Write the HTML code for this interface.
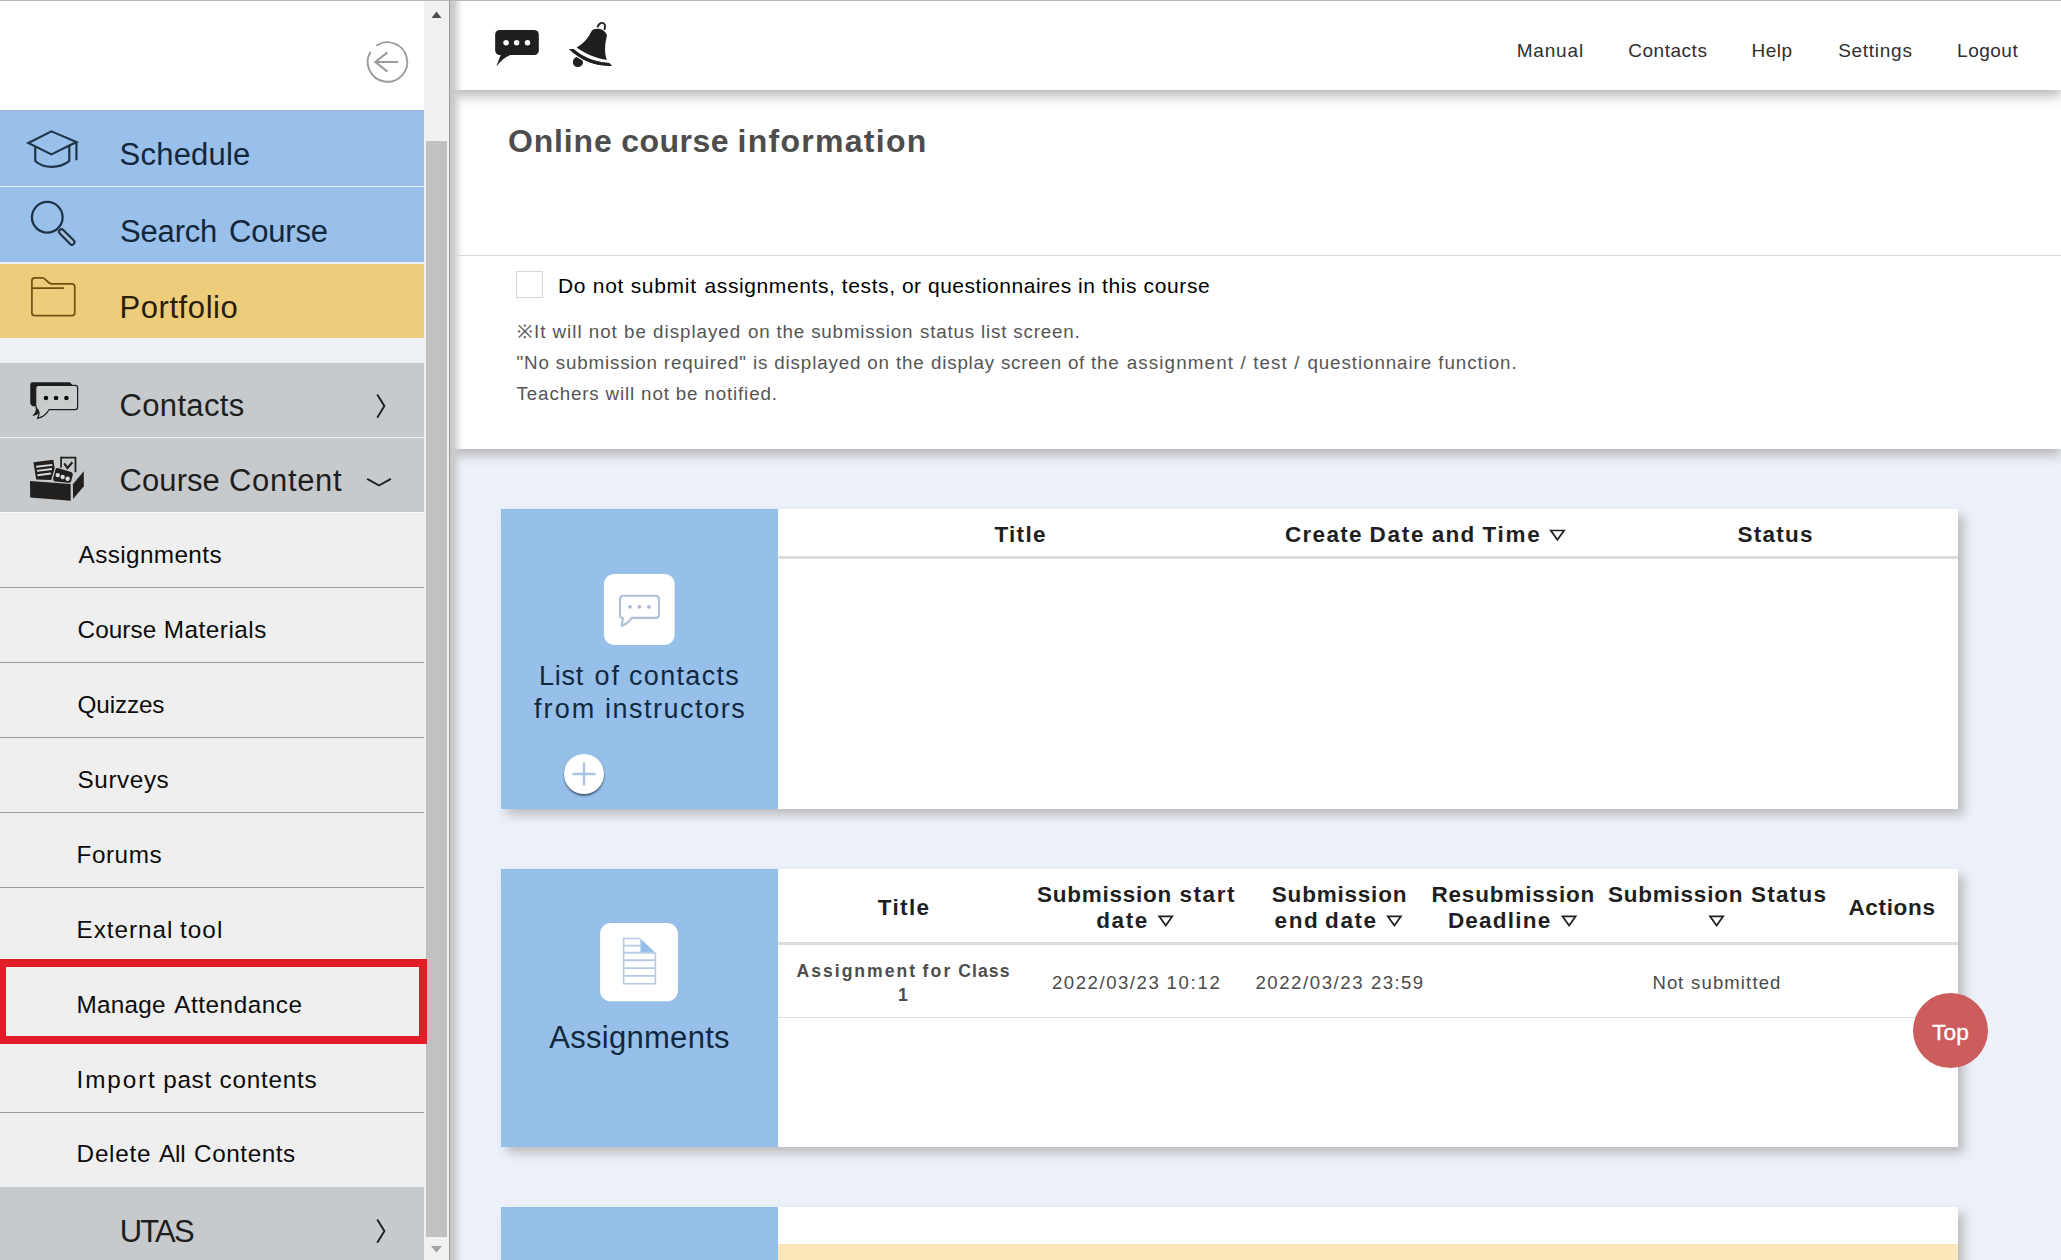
<!DOCTYPE html>
<html><head><meta charset="utf-8"><title>Course</title>
<style>
*{box-sizing:border-box;margin:0;padding:0}
html,body{width:2061px;height:1260px;overflow:hidden}
body{position:relative;background:#edf1f9;font-family:"Liberation Sans",sans-serif;color:#222}
.a{position:absolute}
.t{position:absolute;white-space:nowrap}
svg{position:absolute;overflow:visible}
/* sidebar */
#side{left:0;top:0;width:424px;height:1260px;background:#fff}
.bar{left:0;width:424px;height:76px;border-bottom:1px solid #e4eef9}
.blue{background:#98c0ea}
.yel{background:#edcd7b;border-bottom-color:#f3e3b4}
.gry{background:#c6cacd;border-bottom-color:#eceeef}
.sub{left:0;width:424px;height:75px;background:#efefef;border-bottom:1px solid #9c9c9c}
/* main */
#hdr{left:450px;top:0;width:1611px;height:90px;background:#fff;box-shadow:0 6px 11px rgba(168,168,168,.82)}
#info{left:450px;top:90px;width:1611px;height:359px;background:#fff;box-shadow:0 6px 11px rgba(168,168,168,.82)}
.card{background:#fff;box-shadow:5.500px 5.500px 10px rgba(168,168,168,.72)}
.cblue{background:#96c0e9}
.ibox{background:#fff;border-radius:11px}
.hl{height:3px;background:#dcdcdc}
.rl{height:1px;background:#dcdcdc}
</style></head><body>

<!-- main panels -->
<div class="a" id="info"></div>
<div class="a" id="hdr"></div>
<div class="a" style="left:458px;top:255px;width:1603px;height:1px;background:#dadada"></div>
<div class="a" style="left:516px;top:271px;width:27px;height:27px;border:1px solid #d8d8d8;background:#fff"></div>

<!-- card 1 -->
<div class="a card" style="left:501px;top:509px;width:1457px;height:300px"></div>
<div class="a cblue" style="left:501px;top:509px;width:277px;height:300px"></div>
<div class="a hl" style="left:778px;top:556px;width:1180px"></div>
<svg style="left:595px;top:565px" width="90" height="90" viewBox="0 0 1260 1260">
<rect x="125" y="125" width="990" height="995" rx="140" fill="#fff"/>
<path d="M395 430H850Q895 430 895 475V695Q895 740 850 740H515C480 790 430 830 372 852L392 745C365 740 350 720 350 695V475Q350 430 395 430Z" fill="none" stroke="#afc1d8" stroke-width="30" stroke-linejoin="round"/>
<circle cx="490" cy="585" r="26" fill="#a9b4d6"/><circle cx="622" cy="585" r="26" fill="#a9b8d0"/><circle cx="755" cy="585" r="26" fill="#a9b8d0"/>
</svg>
<svg style="left:554px;top:744px" width="60" height="60" viewBox="0 0 1260 1260">
<defs><filter id="pb" x="-20%" y="-20%" width="140%" height="140%"><feGaussianBlur stdDeviation="20"/></filter></defs>
<circle cx="632" cy="668" r="415" fill="#1f3447" fill-opacity=".85" filter="url(#pb)"/>
<circle cx="630" cy="630" r="420" fill="#fff"/>
<path d="M390 630H870M630 390V870" stroke="#a9c3e6" stroke-width="50" fill="none"/>
</svg>

<!-- card 2 -->
<div class="a card" style="left:501px;top:869px;width:1457px;height:278px"></div>
<div class="a cblue" style="left:501px;top:869px;width:277px;height:278px"></div>
<div class="a hl" style="left:778px;top:942px;width:1180px"></div>
<div class="a rl" style="left:778px;top:1017px;width:1180px"></div>
<svg style="left:594px;top:917px" width="90" height="90" viewBox="0 0 1260 1260">
<rect x="85" y="85" width="1090" height="1095" rx="150" fill="#fff"/>
<path d="M650 300L860 500H650Z" fill="#93bdea"/>
<path d="M650 300H415V935H860V500" fill="none" stroke="#b3cae6" stroke-width="22"/>
<path d="M415 400H650M415 500H860M415 605H860M415 715H860M415 825H860" fill="none" stroke="#b6cbe4" stroke-width="26"/>
</svg>

<!-- card 3 -->
<div class="a card" style="left:501px;top:1207px;width:1457px;height:80px"></div>
<div class="a cblue" style="left:501px;top:1207px;width:277px;height:80px"></div>
<div class="a" style="left:778px;top:1244px;width:1180px;height:30px;background:#fbe7ba"></div>

<!-- sort triangles -->
<svg style="left:0;top:0" width="2061" height="1260" viewBox="0 0 2061 1260" fill="none" stroke="#1f1f1f" stroke-width="1.7" stroke-linejoin="miter">
<path d="M1550.8 530.5H1564.1L1557.4 539.8Z"/>
<path d="M1159.2 916.3H1172.3L1165.8 925.6Z"/>
<path d="M1387.8 916.3H1401.0L1394.4 925.6Z"/>
<path d="M1562.5 916.3H1575.7L1569.1 925.6Z"/>
<path d="M1710.0 916.3H1723.2L1716.6 925.6Z"/>
</svg>

<!-- Top button -->
<div class="a" style="left:1913px;top:993px;width:75px;height:75px;border-radius:50%;background:#cd5c5c"></div>

<!-- header icons -->
<svg style="left:480px;top:10px" width="150" height="70" viewBox="0 0 2061 962">
<g fill="#211f1e">
<rect x="208" y="275" width="600" height="345" rx="62"/>
<path d="M292 600L222 778C290 690 350 640 430 615z"/>
<circle cx="1345" cy="715" r="70"/>
<path d="M1225 540L1285 535C1400 640 1570 715 1775 730L1812 768C1600 772 1400 705 1225 540Z" stroke="#fff" stroke-width="34" paint-order="stroke"/>
<path d="M1225 540L1285 535C1400 640 1570 715 1775 730L1812 768C1600 772 1400 705 1225 540Z"/>
<path d="M1545 275C1580 255 1640 250 1675 268C1710 285 1740 320 1745 350C1725 420 1712 520 1722 600C1728 640 1738 665 1745 685C1600 665 1440 600 1328 515C1400 470 1460 420 1500 350C1520 315 1530 295 1545 275Z"/>
<path d="M1618 228C1640 170 1700 160 1715 205C1720 225 1718 245 1712 262" fill="none" stroke="#211f1e" stroke-width="26" stroke-linecap="round"/>
</g>
<circle cx="358" cy="450" r="38" fill="#fff"/><circle cx="503" cy="450" r="38" fill="#fff"/><circle cx="652" cy="450" r="38" fill="#fff"/>
</svg>

<!-- left frame line + shadow -->
<div class="a" style="left:450px;top:0;width:14px;height:1260px;background:linear-gradient(90deg,rgba(198,198,198,.97),rgba(200,200,200,.9) 28%,rgba(203,203,203,.5) 55%,rgba(205,205,205,.14) 80%,rgba(205,205,205,0))"></div>
<div class="a" style="left:449px;top:0;width:1px;height:1260px;background:#9a9a9a"></div>

<!-- scrollbar -->
<div class="a" style="left:424px;top:0;width:25px;height:1260px;background:#f1f1f1"></div>
<div class="a" style="left:426px;top:141px;width:21px;height:1096px;background:#c1c1c1"></div>
<svg style="left:424px;top:0" width="25" height="1260" viewBox="0 0 25 1260" fill="#505050"><path d="M7.500 18l5-6.500 5 6.500z"/><path d="M7 1246l5.500 6.500 5.500-6.500z" fill="#a3a3a3"/></svg>

<!-- sidebar -->
<div class="a" id="side"></div>
<div class="a bar blue" style="top:110px;height:77px;border-top:1px solid #a2b8d4"></div>
<div class="a bar blue" style="top:187px;height:77px;border-bottom:2px solid #e9f0f6"></div>
<div class="a bar yel" style="top:264px;height:74px;border-bottom:0"></div>
<div class="a" style="left:0;top:338px;width:424px;height:25px;background:#eef2f7"></div>
<div class="a bar gry" style="top:363px;height:75px"></div>
<div class="a bar gry" style="top:438px;height:75px;border-bottom-color:#fbfbfb"></div>
<div class="a sub" style="top:513px"></div>
<div class="a sub" style="top:588px"></div>
<div class="a sub" style="top:663px"></div>
<div class="a sub" style="top:738px"></div>
<div class="a sub" style="top:813px"></div>
<div class="a sub" style="top:888px"></div>
<div class="a sub" style="top:963px"></div>
<div class="a sub" style="top:1038px"></div>
<div class="a sub" style="top:1113px;border-bottom:0"></div>
<div class="a bar gry" style="top:1187px;height:75px;border-bottom:0"></div>
<!-- red highlight -->
<div class="a" style="left:-2.300px;top:959px;width:429.300px;height:85px;border:8px solid #e11e27"></div>

<!-- top hairline -->
<div class="a" style="left:0;top:0;width:2061px;height:1px;background:#b5b5b5"></div>

<!-- sidebar icons -->
<!-- back arrow -->
<svg style="left:357px;top:32px" width="60" height="60" viewBox="0 0 1260 1260" fill="none" stroke="#9c9c9c" stroke-width="40" stroke-linecap="butt" stroke-linejoin="miter">
<path d="M405 288A415 415 0 1 1 285 415"/>
<path d="M865 630H395M640 428L385 630l255 202" stroke-width="44"/>
</svg>
<!-- graduation cap -->
<svg style="left:20px;top:120px" width="70" height="60" viewBox="0 0 1470 1260" fill="none" stroke="#1f3347" stroke-width="46" stroke-linejoin="miter" stroke-linecap="butt">
<path d="M175 485L660 238L1185 462L660 722Z"/>
<path d="M320 565V860C420 950 540 985 670 985C800 985 930 950 1035 860V540"/>
<path d="M1185 462V845"/>
</svg>
<!-- magnifier -->
<svg style="left:20px;top:195px" width="70" height="60" viewBox="0 0 1470 1260" fill="none" stroke="#1f3347" stroke-linecap="round">
<circle cx="573" cy="468" r="322" stroke-width="48"/>
<path d="M873 773L1090 990" stroke-width="150"/>
<path d="M873 773L1090 990" stroke-width="62" stroke="#a6bedb"/>
</svg>
<!-- folder -->
<svg style="left:20px;top:270px" width="70" height="60" viewBox="0 0 1470 1260" fill="none" stroke="#6d5312" stroke-width="36" stroke-linejoin="round">
<path d="M250 225Q250 165 310 165H470C560 165 560 290 670 290H1090Q1150 290 1150 350V900Q1150 960 1090 960H310Q250 960 250 900Z"/>
<path d="M250 380H920"/>
</svg>
<!-- contacts bubble -->
<svg style="left:20px;top:370px" width="70" height="60" viewBox="0 0 1470 1260">
<path d="M215 305Q215 255 265 255H1050L1110 330V800H330C350 850 300 930 255 965C330 950 390 930 420 880L330 760H265Q215 740 215 690Z" fill="#1e1e1e"/>
<path d="M385 325H1155Q1210 325 1210 380V775Q1210 830 1155 830H610C560 930 480 990 365 1015C400 960 410 900 385 850Q330 800 330 740V380Q330 325 385 325Z" fill="#c9cdce" stroke="#1e1e1e" stroke-width="26" stroke-linejoin="round"/>
<circle cx="545" cy="588" r="48" fill="#0c0c0c"/><circle cx="757" cy="588" r="48" fill="#0c0c0c"/><circle cx="975" cy="588" r="48" fill="#0c0c0c"/>
</svg>
<!-- course content box -->
<svg style="left:20px;top:447px" width="70" height="60" viewBox="0 0 1470 1260">
<g fill="#22201e">
<path d="M860 225H1165V530" fill="none" stroke="#22201e" stroke-width="38"/>
<path d="M862 206V435" fill="none" stroke="#22201e" stroke-width="36"/>
<path d="M930 345L997 442L1100 322" fill="none" stroke="#22201e" stroke-width="46"/>
<path d="M282 322L700 268L728 445L655 695L340 685Z"/>
<path d="M745 470Q760 430 810 445L1070 525Q1120 545 1105 600L1075 720Q1060 760 1010 750L740 725Q690 715 695 660Z" stroke="#c9cdce" stroke-width="22" paint-order="stroke"/>
<path d="M210 715L1065 775V1130L215 1060Z"/>
<path d="M1110 782L1340 508V822L1115 1092Z"/>
</g>
<g stroke="#d9dbdb" stroke-width="40" fill="none"><path d="M340 415L680 375M355 502L672 462M365 592L650 556"/></g>
<circle cx="792" cy="590" r="46" fill="#dcdedd"/><circle cx="895" cy="630" r="46" fill="#dcdedd"/><circle cx="1000" cy="667" r="46" fill="#dcdedd"/>
</svg>
<!-- chevrons -->
<svg style="left:0;top:0" width="424" height="1260" viewBox="0 0 424 1260" fill="none" stroke="#1e1e1e" stroke-width="1.9" stroke-linejoin="miter">
<path d="M377.200 394.400l7.200 11.600-7.200 11.700"/>
<path d="M377.200 1219.400l7.200 11.600-7.200 11.700"/>
<path d="M367.200 478.900l11.800 6.600 11.900-6.600"/>
</svg>

<div class="t" style="left:119.60px;top:138.90px;font-size:31px;line-height:31px;font-weight:400;color:#13263a;letter-spacing:0.210px;">Schedule</div>
<div class="t" style="left:120.10px;top:215.90px;font-size:31px;line-height:31px;font-weight:400;color:#13263a;letter-spacing:-0.196px;">Search</div>
<div class="t" style="left:229.00px;top:215.90px;font-size:31px;line-height:31px;font-weight:400;color:#13263a;letter-spacing:-0.178px;">Course</div>
<div class="t" style="left:119.40px;top:291.70px;font-size:31px;line-height:31px;font-weight:400;color:#2a2008;letter-spacing:0.590px;">Portfolio</div>
<div class="t" style="left:119.60px;top:390.30px;font-size:31px;line-height:31px;font-weight:400;color:#1e1e1e;letter-spacing:0.324px;">Contacts</div>
<div class="t" style="left:119.60px;top:465.40px;font-size:31px;line-height:31px;font-weight:400;color:#1e1e1e;letter-spacing:0.062px;">Course</div>
<div class="t" style="left:229.00px;top:465.40px;font-size:31px;line-height:31px;font-weight:400;color:#1e1e1e;letter-spacing:0.673px;">Content</div>
<div class="t" style="left:119.80px;top:1215.90px;font-size:31px;line-height:31px;font-weight:400;color:#1e1e1e;letter-spacing:-1.866px;">UTAS</div>
<div class="t" style="left:78.60px;top:542.90px;font-size:24.3px;line-height:24.3px;font-weight:400;color:#0c0c0c;letter-spacing:0.386px;">Assignments</div>
<div class="t" style="left:77.60px;top:617.70px;font-size:24.3px;line-height:24.3px;font-weight:400;color:#0c0c0c;letter-spacing:0.058px;">Course</div>
<div class="t" style="left:163.70px;top:617.70px;font-size:24.3px;line-height:24.3px;font-weight:400;color:#0c0c0c;letter-spacing:0.523px;">Materials</div>
<div class="t" style="left:77.60px;top:692.90px;font-size:24.3px;line-height:24.3px;font-weight:400;color:#0c0c0c;letter-spacing:-0.153px;">Quizzes</div>
<div class="t" style="left:77.60px;top:767.70px;font-size:24.3px;line-height:24.3px;font-weight:400;color:#0c0c0c;letter-spacing:0.563px;">Surveys</div>
<div class="t" style="left:76.60px;top:842.90px;font-size:24.3px;line-height:24.3px;font-weight:400;color:#0c0c0c;letter-spacing:0.520px;">Forums</div>
<div class="t" style="left:76.60px;top:917.70px;font-size:24.3px;line-height:24.3px;font-weight:400;color:#0c0c0c;letter-spacing:0.938px;">External</div>
<div class="t" style="left:180.00px;top:917.70px;font-size:24.3px;line-height:24.3px;font-weight:400;color:#0c0c0c;letter-spacing:1.041px;">tool</div>
<div class="t" style="left:76.60px;top:992.90px;font-size:24.3px;line-height:24.3px;font-weight:400;color:#0c0c0c;letter-spacing:0.242px;">Manage</div>
<div class="t" style="left:174.30px;top:992.90px;font-size:24.3px;line-height:24.3px;font-weight:400;color:#0c0c0c;letter-spacing:0.520px;">Attendance</div>
<div class="t" style="left:76.60px;top:1067.70px;font-size:24.3px;line-height:24.3px;font-weight:400;color:#0c0c0c;letter-spacing:1.879px;">Import</div>
<div class="t" style="left:163.30px;top:1067.70px;font-size:24.3px;line-height:24.3px;font-weight:400;color:#0c0c0c;letter-spacing:0.642px;">past</div>
<div class="t" style="left:219.60px;top:1067.70px;font-size:24.3px;line-height:24.3px;font-weight:400;color:#0c0c0c;letter-spacing:0.757px;">contents</div>
<div class="t" style="left:76.60px;top:1142.30px;font-size:24.3px;line-height:24.3px;font-weight:400;color:#0c0c0c;letter-spacing:0.736px;">Delete</div>
<div class="t" style="left:159.10px;top:1142.30px;font-size:24.3px;line-height:24.3px;font-weight:400;color:#0c0c0c;letter-spacing:-0.202px;">All</div>
<div class="t" style="left:194.10px;top:1142.30px;font-size:24.3px;line-height:24.3px;font-weight:400;color:#0c0c0c;letter-spacing:0.557px;">Contents</div>
<div class="t" style="left:1516.70px;top:41.10px;font-size:19px;line-height:19px;font-weight:400;color:#2e2e2e;letter-spacing:0.821px;">Manual</div>
<div class="t" style="left:1628.30px;top:41.10px;font-size:19px;line-height:19px;font-weight:400;color:#2e2e2e;letter-spacing:0.517px;">Contacts</div>
<div class="t" style="left:1751.50px;top:41.10px;font-size:19px;line-height:19px;font-weight:400;color:#2e2e2e;letter-spacing:0.530px;">Help</div>
<div class="t" style="left:1838.20px;top:41.10px;font-size:19px;line-height:19px;font-weight:400;color:#2e2e2e;letter-spacing:0.721px;">Settings</div>
<div class="t" style="left:1957.10px;top:41.10px;font-size:19px;line-height:19px;font-weight:400;color:#2e2e2e;letter-spacing:0.493px;">Logout</div>
<div class="t" style="left:507.90px;top:124.80px;font-size:32px;line-height:32px;font-weight:700;color:#4d4d4d;letter-spacing:0.847px;">Online</div>
<div class="t" style="left:621.30px;top:124.80px;font-size:32px;line-height:32px;font-weight:700;color:#4d4d4d;letter-spacing:0.452px;">course</div>
<div class="t" style="left:737.50px;top:124.80px;font-size:32px;line-height:32px;font-weight:700;color:#4d4d4d;letter-spacing:1.286px;">information</div>
<div class="t" style="left:558.00px;top:274.50px;font-size:21px;line-height:21px;font-weight:400;color:#000;letter-spacing:0.706px;">Do not submit</div>
<div class="t" style="left:704.50px;top:274.50px;font-size:21px;line-height:21px;font-weight:400;color:#000;letter-spacing:0.600px;">assignments, tests,</div>
<div class="t" style="left:901.90px;top:274.50px;font-size:21px;line-height:21px;font-weight:400;color:#000;letter-spacing:0.519px;">or questionnaires</div>
<div class="t" style="left:1077.90px;top:274.50px;font-size:21px;line-height:21px;font-weight:400;color:#000;letter-spacing:0.620px;">in this course</div>
<div class="t" style="left:517.00px;top:322.80px;font-size:18.8px;line-height:18.8px;font-weight:400;color:#555;letter-spacing:0.979px;">※It will not be displayed</div>
<div class="t" style="left:748.00px;top:322.80px;font-size:18.8px;line-height:18.8px;font-weight:400;color:#555;letter-spacing:0.817px;">on the submission</div>
<div class="t" style="left:920.00px;top:322.80px;font-size:18.8px;line-height:18.8px;font-weight:400;color:#555;letter-spacing:0.818px;">status list screen.</div>
<div class="t" style="left:516.60px;top:353.80px;font-size:18.8px;line-height:18.8px;font-weight:400;color:#555;letter-spacing:0.815px;">&quot;No submission required&quot;</div>
<div class="t" style="left:753.00px;top:353.80px;font-size:18.8px;line-height:18.8px;font-weight:400;color:#555;letter-spacing:0.843px;">is displayed on the</div>
<div class="t" style="left:931.10px;top:353.80px;font-size:18.8px;line-height:18.8px;font-weight:400;color:#555;letter-spacing:0.769px;">display screen of the</div>
<div class="t" style="left:1126.70px;top:353.80px;font-size:18.8px;line-height:18.8px;font-weight:400;color:#555;letter-spacing:1.134px;">assignment / test /</div>
<div class="t" style="left:1307.40px;top:353.80px;font-size:18.8px;line-height:18.8px;font-weight:400;color:#555;letter-spacing:0.920px;">questionnaire function.</div>
<div class="t" style="left:516.60px;top:384.50px;font-size:18.8px;line-height:18.8px;font-weight:400;color:#555;letter-spacing:0.841px;">Teachers will not be notified.</div>
<div class="t" style="left:994.40px;top:523.70px;font-size:22.5px;line-height:22.5px;font-weight:700;color:#1f1f1f;letter-spacing:1.317px;">Title</div>
<div class="t" style="left:1285.00px;top:523.80px;font-size:22.5px;line-height:22.5px;font-weight:700;color:#1f1f1f;letter-spacing:1.295px;">Create</div>
<div class="t" style="left:1369.50px;top:523.80px;font-size:22.5px;line-height:22.5px;font-weight:700;color:#1f1f1f;letter-spacing:1.782px;">Date</div>
<div class="t" style="left:1431.70px;top:523.80px;font-size:22.5px;line-height:22.5px;font-weight:700;color:#1f1f1f;letter-spacing:1.221px;">and</div>
<div class="t" style="left:1482.40px;top:523.80px;font-size:22.5px;line-height:22.5px;font-weight:700;color:#1f1f1f;letter-spacing:1.768px;">Time</div>
<div class="t" style="left:1737.40px;top:523.80px;font-size:22.5px;line-height:22.5px;font-weight:700;color:#1f1f1f;letter-spacing:1.270px;">Status</div>
<div class="t" style="left:539.00px;top:662.70px;font-size:27px;line-height:27px;font-weight:400;color:#12283f;letter-spacing:0.762px;">List</div>
<div class="t" style="left:594.50px;top:662.70px;font-size:27px;line-height:27px;font-weight:400;color:#12283f;letter-spacing:2.084px;">of</div>
<div class="t" style="left:629.00px;top:662.70px;font-size:27px;line-height:27px;font-weight:400;color:#12283f;letter-spacing:1.321px;">contacts</div>
<div class="t" style="left:534.00px;top:695.90px;font-size:27px;line-height:27px;font-weight:400;color:#12283f;letter-spacing:2.097px;">from</div>
<div class="t" style="left:604.90px;top:695.90px;font-size:27px;line-height:27px;font-weight:400;color:#12283f;letter-spacing:1.527px;">instructors</div>
<div class="t" style="left:877.70px;top:896.70px;font-size:22.5px;line-height:22.5px;font-weight:700;color:#1f1f1f;letter-spacing:1.392px;">Title</div>
<div class="t" style="left:1037.10px;top:883.90px;font-size:22.5px;line-height:22.5px;font-weight:700;color:#1f1f1f;letter-spacing:0.725px;">Submission</div>
<div class="t" style="left:1179.50px;top:883.90px;font-size:22.5px;line-height:22.5px;font-weight:700;color:#1f1f1f;letter-spacing:1.556px;">start</div>
<div class="t" style="left:1096.30px;top:909.60px;font-size:22.5px;line-height:22.5px;font-weight:700;color:#1f1f1f;letter-spacing:1.550px;">date</div>
<div class="t" style="left:1271.80px;top:883.90px;font-size:22.5px;line-height:22.5px;font-weight:700;color:#1f1f1f;letter-spacing:0.792px;">Submission</div>
<div class="t" style="left:1274.60px;top:909.60px;font-size:22.5px;line-height:22.5px;font-weight:700;color:#1f1f1f;letter-spacing:1.521px;">end</div>
<div class="t" style="left:1325.10px;top:909.60px;font-size:22.5px;line-height:22.5px;font-weight:700;color:#1f1f1f;letter-spacing:1.583px;">date</div>
<div class="t" style="left:1431.40px;top:883.90px;font-size:22.5px;line-height:22.5px;font-weight:700;color:#1f1f1f;letter-spacing:0.832px;">Resubmission</div>
<div class="t" style="left:1447.90px;top:909.60px;font-size:22.5px;line-height:22.5px;font-weight:700;color:#1f1f1f;letter-spacing:1.233px;">Deadline</div>
<div class="t" style="left:1607.90px;top:883.90px;font-size:22.5px;line-height:22.5px;font-weight:700;color:#1f1f1f;letter-spacing:0.781px;">Submission</div>
<div class="t" style="left:1750.90px;top:883.90px;font-size:22.5px;line-height:22.5px;font-weight:700;color:#1f1f1f;letter-spacing:1.290px;">Status</div>
<div class="t" style="left:1848.40px;top:896.90px;font-size:22.5px;line-height:22.5px;font-weight:700;color:#1f1f1f;letter-spacing:0.668px;">Actions</div>
<div class="t" style="left:796.60px;top:963.40px;font-size:17.6px;line-height:17.6px;font-weight:700;color:#4d4d4d;letter-spacing:1.974px;">Assignment</div>
<div class="t" style="left:922.40px;top:963.40px;font-size:17.6px;line-height:17.6px;font-weight:700;color:#4d4d4d;letter-spacing:2.197px;">for</div>
<div class="t" style="left:958.20px;top:963.40px;font-size:17.6px;line-height:17.6px;font-weight:700;color:#4d4d4d;letter-spacing:1.084px;">Class</div>
<div class="t" style="left:897.90px;top:986.60px;font-size:17.6px;line-height:17.6px;font-weight:700;color:#4d4d4d;letter-spacing:0.000px;">1</div>
<div class="t" style="left:1052.00px;top:973.70px;font-size:18.6px;line-height:18.6px;font-weight:400;color:#4a4a4a;letter-spacing:1.520px;">2022/03/23</div>
<div class="t" style="left:1166.50px;top:973.70px;font-size:18.6px;line-height:18.6px;font-weight:400;color:#4a4a4a;letter-spacing:1.703px;">10:12</div>
<div class="t" style="left:1255.40px;top:973.70px;font-size:18.6px;line-height:18.6px;font-weight:400;color:#4a4a4a;letter-spacing:1.565px;">2022/03/23</div>
<div class="t" style="left:1370.90px;top:973.70px;font-size:18.6px;line-height:18.6px;font-weight:400;color:#4a4a4a;letter-spacing:1.403px;">23:59</div>
<div class="t" style="left:1652.60px;top:973.70px;font-size:18.5px;line-height:18.5px;font-weight:400;color:#4a4a4a;letter-spacing:0.926px;">Not</div>
<div class="t" style="left:1691.10px;top:973.70px;font-size:18.5px;line-height:18.5px;font-weight:400;color:#4a4a4a;letter-spacing:1.135px;">submitted</div>
<div class="t" style="left:549.20px;top:1022.40px;font-size:31px;line-height:31px;font-weight:400;color:#12283f;letter-spacing:0.294px;">Assignments</div>
<div class="t" style="left:1932.10px;top:1020.60px;font-size:22.7px;line-height:22.7px;font-weight:400;color:#fff;letter-spacing:0.120px;-webkit-text-stroke:.35px #fff;">Top</div>
</body></html>
